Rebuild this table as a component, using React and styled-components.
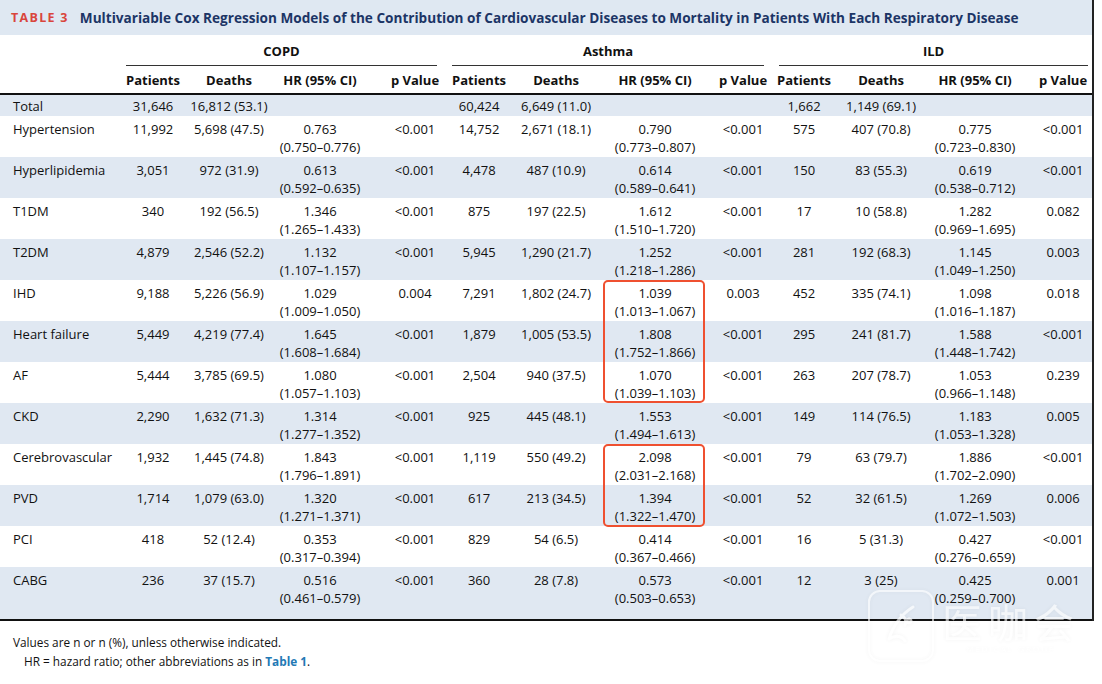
import React from "react";
import styled, { createGlobalStyle } from "styled-components";

const GlobalStyle = createGlobalStyle`
  html, body {
    margin: 0;
    padding: 0;
    background: #ffffff;
  }
  body {
    font-family: "Open Sans", "Noto Sans", sans-serif;
    color: #111;
  }
`;

const Page = styled.div`
  width: 1102px;
  height: 684px;
  overflow: hidden;
  position: relative;
`;

const Frame = styled.div`
  width: 1092px;
  border-right: 2px solid #222;
  position: relative;
`;

const TitleBar = styled.div`
  height: 35px;
  background: #dfe8f2;
  display: flex;
  align-items: center;
  padding-left: 11px;
  gap: 11px;
  font-weight: 700;
  font-size: 13.6px;
  white-space: nowrap;
`;

const TableNo = styled.span`
  color: #d9453c;
  letter-spacing: 1.3px;
  font-size: 12.5px;
`;

const TitleText = styled.span`
  color: #1c3566;
`;

const Table = styled.table`
  width: 1092px;
  table-layout: fixed;
  border-collapse: collapse;
  font-size: 13px;
  line-height: 18px;
`;

const GroupTh = styled.th`
  height: 31px;
  padding: 0;
  font-weight: 700;
  vertical-align: bottom;
`;

const GroupLabel = styled.div`
  padding-bottom: 5px;
  margin: 0 ${(p) => p.$right}px 0 ${(p) => p.$left}px;
  border-bottom: 1.5px solid #333;
`;

const HeadRow = styled.tr`
  border-bottom: 2px solid #111;
`;

const ColTh = styled.th`
  height: 26px;
  padding: 1px 0 0 ${(p) => (p.$pv ? 10 : 0)}px;
  font-weight: 700;
  text-align: center;
  vertical-align: middle;
  white-space: nowrap;
`;

const Row = styled.tr`
  background: ${(p) => (p.$shade ? "#e0e8f2" : "#ffffff")};
  height: ${(p) => p.$h}px;
  border-bottom: ${(p) => (p.$last ? "2px solid #111" : "none")};
`;

const LabelTd = styled.td`
  padding: ${(p) => p.$top}px 0 0 13px;
  vertical-align: top;
  white-space: nowrap;
`;

const Td = styled.td`
  padding: ${(p) => p.$top}px 0 0 ${(p) => (p.$pv ? 10 : 0)}px;
  text-align: center;
  vertical-align: top;
  white-space: nowrap;
`;

const Highlight = styled.div`
  position: absolute;
  left: 603px;
  width: 98px;
  border: 2px solid #ef5030;
  border-radius: 5px;
  pointer-events: none;
`;

const Notes = styled.div`
  padding: 12px 0 0 13px;
  font-size: 11.8px;
  line-height: 19px;
`;

const NoteLine = styled.div`
  padding-left: ${(p) => (p.$indent ? 11 : 0)}px;
`;

const RefLink = styled.span`
  color: #2379b5;
  font-weight: 700;
`;

const Watermark = styled.div`
  position: absolute;
  left: 868px;
  top: 590px;
  display: flex;
  align-items: center;
  gap: 8px;
  opacity: 0.7;
  pointer-events: none;
  filter: drop-shadow(0 0 2px rgba(0, 0, 0, 0.08));
`;

const WmBox = styled.div`
  width: 62px;
  height: 68px;
  border: 2px solid rgba(255, 255, 255, 0.9);
  border-radius: 12px;
  display: flex;
  align-items: center;
  justify-content: center;
`;

const WmText = styled.div`
  display: flex;
  flex-direction: column;
  align-items: center;
  color: rgba(255, 255, 255, 0.9);
`;

const WmBig = styled.div`
  font-family: "Noto Sans CJK SC", sans-serif;
  font-size: 40px;
  line-height: 44px;
  letter-spacing: 6px;
`;

const WmSmall = styled.div`
  font-size: 8px;
  letter-spacing: 2px;
`;

const widths = [120, 66, 86, 96, 84, 54, 100, 98, 68, 64, 90, 98, 68];

const rows = [
  ["Total", "31,646", "16,812 (53.1)", "", "", "60,424", "6,649 (11.0)", "", "", "1,662", "1,149 (69.1)", "", ""],
  ["Hypertension", "11,992", "5,698 (47.5)", "0.763|(0.750–0.776)", "<0.001", "14,752", "2,671 (18.1)", "0.790|(0.773–0.807)", "<0.001", "575", "407 (70.8)", "0.775|(0.723–0.830)", "<0.001"],
  ["Hyperlipidemia", "3,051", "972 (31.9)", "0.613|(0.592–0.635)", "<0.001", "4,478", "487 (10.9)", "0.614|(0.589–0.641)", "<0.001", "150", "83 (55.3)", "0.619|(0.538–0.712)", "<0.001"],
  ["T1DM", "340", "192 (56.5)", "1.346|(1.265–1.433)", "<0.001", "875", "197 (22.5)", "1.612|(1.510–1.720)", "<0.001", "17", "10 (58.8)", "1.282|(0.969–1.695)", "0.082"],
  ["T2DM", "4,879", "2,546 (52.2)", "1.132|(1.107–1.157)", "<0.001", "5,945", "1,290 (21.7)", "1.252|(1.218–1.286)", "<0.001", "281", "192 (68.3)", "1.145|(1.049–1.250)", "0.003"],
  ["IHD", "9,188", "5,226 (56.9)", "1.029|(1.009–1.050)", "0.004", "7,291", "1,802 (24.7)", "1.039|(1.013–1.067)", "0.003", "452", "335 (74.1)", "1.098|(1.016–1.187)", "0.018"],
  ["Heart failure", "5,449", "4,219 (77.4)", "1.645|(1.608–1.684)", "<0.001", "1,879", "1,005 (53.5)", "1.808|(1.752–1.866)", "<0.001", "295", "241 (81.7)", "1.588|(1.448–1.742)", "<0.001"],
  ["AF", "5,444", "3,785 (69.5)", "1.080|(1.057–1.103)", "<0.001", "2,504", "940 (37.5)", "1.070|(1.039–1.103)", "<0.001", "263", "207 (78.7)", "1.053|(0.966–1.148)", "0.239"],
  ["CKD", "2,290", "1,632 (71.3)", "1.314|(1.277–1.352)", "<0.001", "925", "445 (48.1)", "1.553|(1.494–1.613)", "<0.001", "149", "114 (76.5)", "1.183|(1.053–1.328)", "0.005"],
  ["Cerebrovascular", "1,932", "1,445 (74.8)", "1.843|(1.796–1.891)", "<0.001", "1,119", "550 (49.2)", "2.098|(2.031–2.168)", "<0.001", "79", "63 (79.7)", "1.886|(1.702–2.090)", "<0.001"],
  ["PVD", "1,714", "1,079 (63.0)", "1.320|(1.271–1.371)", "<0.001", "617", "213 (34.5)", "1.394|(1.322–1.470)", "<0.001", "52", "32 (61.5)", "1.269|(1.072–1.503)", "0.006"],
  ["PCI", "418", "52 (12.4)", "0.353|(0.317–0.394)", "<0.001", "829", "54 (6.5)", "0.414|(0.367–0.466)", "<0.001", "16", "5 (31.3)", "0.427|(0.276–0.659)", "<0.001"],
  ["CABG", "236", "37 (15.7)", "0.516|(0.461–0.579)", "<0.001", "360", "28 (7.8)", "0.573|(0.503–0.653)", "<0.001", "12", "3 (25)", "0.425|(0.259–0.700)", "0.001"],
];

const subHeads = ["Patients", "Deaths", "HR (95% CI)", "p Value"];

const Cell = ({ value, pv, top }) => {
  const parts = value.split("|");
  return (
    <Td $pv={pv} $top={top}>
      {parts.map((p, i) => (
        <div key={i}>{p}</div>
      ))}
    </Td>
  );
};

const App = () => {
  return (
    <Page>
      <GlobalStyle />
      <Frame>
        <TitleBar>
          <TableNo>TABLE 3</TableNo>
          <TitleText>
            Multivariable Cox Regression Models of the Contribution of Cardiovascular Diseases to
            Mortality in Patients With Each Respiratory Disease
          </TitleText>
        </TitleBar>
        <Table>
          <colgroup>
            {widths.map((w, i) => (
              <col key={i} style={{ width: w }} />
            ))}
          </colgroup>
          <thead>
            <tr>
              <GroupTh />
              <GroupTh colSpan={4}>
                <GroupLabel $left={6} $right={15}>COPD</GroupLabel>
              </GroupTh>
              <GroupTh colSpan={4}>
                <GroupLabel $left={0} $right={8}>Asthma</GroupLabel>
              </GroupTh>
              <GroupTh colSpan={4}>
                <GroupLabel $left={7} $right={4}>ILD</GroupLabel>
              </GroupTh>
            </tr>
            <HeadRow>
              <ColTh />
              {[0, 1, 2].map((g) =>
                subHeads.map((h, i) => (
                  <ColTh key={`${g}-${i}`} $pv={i === 3}>
                    {h}
                  </ColTh>
                ))
              )}
            </HeadRow>
          </thead>
          <tbody>
            {rows.map((r, idx) => {
              const first = idx === 0;
              const h = first ? 22 : idx === rows.length - 1 ? 53 : 41;
              const top = first ? 2 : 4;
              return (
                <Row key={r[0]} $shade={idx % 2 === 0} $h={h} $last={idx === rows.length - 1}>
                  <LabelTd $top={top}>{r[0]}</LabelTd>
                  {r.slice(1).map((v, i) => (
                    <Cell key={i} value={v} pv={i % 4 === 3} top={top} />
                  ))}
                </Row>
              );
            })}
          </tbody>
        </Table>
        <Highlight style={{ top: 280, height: 119 }} />
        <Highlight style={{ top: 444, height: 79 }} />
      </Frame>
      <Notes>
        <NoteLine>Values are n or n (%), unless otherwise indicated.</NoteLine>
        <NoteLine $indent>
          HR = hazard ratio; other abbreviations as in <RefLink>Table 1</RefLink>.
        </NoteLine>
      </Notes>
      <Watermark>
        <WmBox>
          <svg width="44" height="50" viewBox="0 0 44 50" fill="none">
            <path
              d="M34 6 C24 12 14 24 10 38 M10 38 C16 34 22 34 26 40 M22 14 C26 16 28 20 26 24 M30 18 a2 2 0 1 0 0.1 0"
              stroke="rgba(255,255,255,0.95)"
              strokeWidth="3"
              strokeLinecap="round"
            />
          </svg>
        </WmBox>
        <WmText>
          <WmBig>医咖会</WmBig>
          <WmSmall>MEDICAL GROUP</WmSmall>
        </WmText>
      </Watermark>
    </Page>
  );
};

export default App;
